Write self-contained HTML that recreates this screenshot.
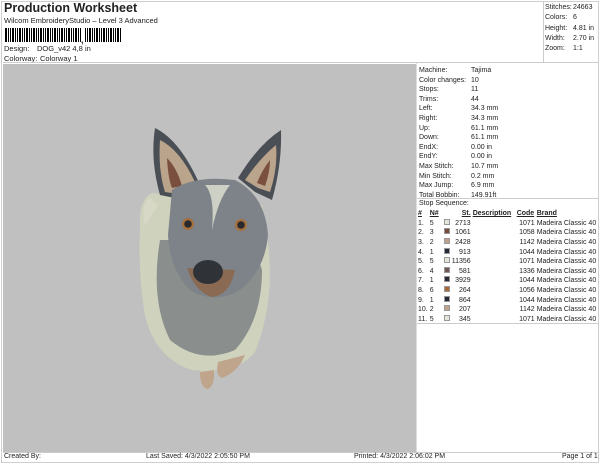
<!DOCTYPE html>
<html><head><style>
*{margin:0;padding:0;box-sizing:border-box}
body{width:600px;height:464px;background:#fff;font-family:"Liberation Sans",sans-serif;color:#222;position:relative;overflow:hidden;font-size:7px}
.a{position:absolute;white-space:nowrap}
#frame{position:absolute;left:1px;top:1px;width:598px;height:462px;border:1px solid #cfcfcf}
#gray{position:absolute;left:3px;top:64px;width:413px;height:388px;background:#c0c0c0}
#rp{position:absolute;left:416px;top:63px;width:182px;height:389px;border-left:1px solid #ddd}
.row{position:absolute;left:2px;white-space:nowrap;width:170px}
.row span{position:absolute;left:52px;white-space:nowrap}
table{position:absolute;left:417px;top:209px;border-collapse:collapse;font-size:7px}
td{padding:0 1px;height:9.6px;line-height:9px;white-space:nowrap}
.sw{display:inline-block;width:6px;height:6px;border:1px solid #999}
</style></head><body>
<div id="frame"></div>
<div class="a" style="left:4px;top:1px;font-size:12.5px;font-weight:bold">Production Worksheet</div>
<div class="a" style="left:4px;top:16px;font-size:7.5px">Wilcom EmbroideryStudio – Level 3 Advanced</div>
<div class="a" style="left:5px;top:28px;width:117px;height:14px;background:repeating-linear-gradient(90deg,#000 0 2px,#fff 2px 3px,#000 3px 4px,#fff 4px 5px,#000 5px 6px,#fff 6px 7px)"></div>
<div class="a" style="left:81px;top:28px;width:3px;height:14px;background:#fff"></div>
<div class="a" style="left:81px;top:35px;font-size:9px;font-weight:bold">,</div>
<div class="a" style="left:4px;top:44px;font-size:7.5px">Design:</div>
<div class="a" style="left:37px;top:44px;font-size:7.5px">DOG_v42 4,8 in</div>
<div class="a" style="left:4px;top:54px;font-size:7.5px">Colorway:</div>
<div class="a" style="left:40px;top:54px;font-size:7.5px">Colorway 1</div>
<div class="a" style="left:3px;top:62px;width:595px;height:1px;background:#ccc"></div>
<div class="a" style="left:543px;top:1px;width:1px;height:62px;background:#ccc"></div>
<div class="a" style="left:545px;top:3px;font-size:7px;line-height:10.3px">Stitches:<br>Colors:<br>Height:<br>Width:<br>Zoom:</div>
<div class="a" style="left:573px;top:3px;font-size:7px;line-height:10.3px">24663<br>6<br>4.81 in<br>2.70 in<br>1:1</div>
<div id="gray">
<svg width="413" height="388" viewBox="3 64 413 388">
<path d="M152 193 Q138 200 140 230 Q138 270 144 310 Q150 345 175 362 Q190 372 200 370 L205 385 L212 386 L215 370 Q240 370 255 352 Q268 320 270 280 Q270 240 262 205 Z" fill="#cfd2bd"/>
<path d="M150 198 Q140 205 145 225 Q152 215 158 205 Z" fill="#d8d8c6"/>
<path d="M160 240 Q150 300 170 340 Q200 365 235 350 Q262 320 262 270 Q250 230 210 240 Z" fill="#8a8e8c"/>
<path d="M155 128 Q150 160 160 195 L185 200 L200 185 Q180 140 155 128 Z" fill="#4a4f55"/>
<path d="M160 140 Q158 170 165 192 L185 195 L195 182 Q180 150 160 140 Z" fill="#bba48c"/>
<path d="M167 158 Q168 178 172 188 L182 186 Q177 168 167 158 Z" fill="#7a4f3e"/>
<path d="M281 130 Q258 145 238 178 L255 192 L272 200 Q282 165 281 130 Z" fill="#4a4f55"/>
<path d="M276 145 Q260 158 245 180 L258 188 L270 192 Q278 168 276 145 Z" fill="#bba48c"/>
<path d="M270 160 Q262 170 257 183 L265 186 Q270 172 270 160 Z" fill="#7a4f3e"/>
<path d="M172 190 Q195 175 235 180 Q265 195 268 235 Q265 270 240 290 Q215 305 190 290 Q170 270 168 235 Z" fill="#7d8388"/>
<path d="M205 185 Q215 195 212 230 Q218 200 230 185 Z" fill="#cdd0c4"/>
<circle cx="188" cy="224" r="6" fill="#a7703f"/><circle cx="188" cy="224" r="3.8" fill="#2a2a2e"/>
<circle cx="241" cy="225" r="6" fill="#a7703f"/><circle cx="241" cy="225" r="3.8" fill="#2a2a2e"/>
<path d="M187 268 Q195 292 212 297 Q230 295 235 270 Z" fill="#8a6a52"/>
<ellipse cx="208" cy="272" rx="15" ry="12" fill="#2f3236"/>
<path d="M200 372 Q200 388 208 389 Q215 386 214 370 Z" fill="#bfa58c"/>
<path d="M218 362 Q215 375 222 378 Q238 372 245 355 Z" fill="#bfa58c"/>
</svg>
</div>
<div id="rp">
<div class="row" style="top:4px">Machine:<span>Tajima</span></div>
<div class="row" style="top:13.6px">Color changes:<span>10</span></div>
<div class="row" style="top:23.2px">Stops:<span>11</span></div>
<div class="row" style="top:32.8px">Trims:<span>44</span></div>
<div class="row" style="top:42.4px">Left:<span>34.3 mm</span></div>
<div class="row" style="top:52px">Right:<span>34.3 mm</span></div>
<div class="row" style="top:61.6px">Up:<span>61.1 mm</span></div>
<div class="row" style="top:71.2px">Down:<span>61.1 mm</span></div>
<div class="row" style="top:80.8px">EndX:<span>0.00 in</span></div>
<div class="row" style="top:90.4px">EndY:<span>0.00 in</span></div>
<div class="row" style="top:100px">Max Stitch:<span>10.7 mm</span></div>
<div class="row" style="top:109.6px">Min Stitch:<span>0.2 mm</span></div>
<div class="row" style="top:119.2px">Max Jump:<span>6.9 mm</span></div>
<div class="row" style="top:128.8px">Total Bobbin:<span>149.91ft</span></div>
<div class="a" style="left:0;top:135px;width:182px;height:1px;background:#ccc"></div>
<div class="row" style="top:137px">Stop Sequence:</div>
<div class="a" style="left:0;top:260px;width:182px;height:1px;background:#ccc"></div>
</div>
<table>
<tr style="font-weight:bold;text-decoration:underline"><td style="width:11px">#</td><td style="width:14px">N#</td><td style="width:8px"></td><td style="width:20px;text-align:right">St.</td><td style="width:44px">Description</td><td style="width:20px">Code</td><td>Brand</td></tr>
<tr><td>1.</td><td>5</td><td><i class="sw" style="background:#e8e6dc"></i></td><td align=right>2713</td><td></td><td align=right>1071</td><td>Madeira Classic 40</td></tr>
<tr><td>2.</td><td>3</td><td><i class="sw" style="background:#7a4a38"></i></td><td align=right>1061</td><td></td><td align=right>1058</td><td>Madeira Classic 40</td></tr>
<tr><td>3.</td><td>2</td><td><i class="sw" style="background:#c0a08e"></i></td><td align=right>2428</td><td></td><td align=right>1142</td><td>Madeira Classic 40</td></tr>
<tr><td>4.</td><td>1</td><td><i class="sw" style="background:#262a38"></i></td><td align=right>913</td><td></td><td align=right>1044</td><td>Madeira Classic 40</td></tr>
<tr><td>5.</td><td>5</td><td><i class="sw" style="background:#e8e6dc"></i></td><td align=right>11356</td><td></td><td align=right>1071</td><td>Madeira Classic 40</td></tr>
<tr><td>6.</td><td>4</td><td><i class="sw" style="background:#6e5a55"></i></td><td align=right>581</td><td></td><td align=right>1336</td><td>Madeira Classic 40</td></tr>
<tr><td>7.</td><td>1</td><td><i class="sw" style="background:#262a38"></i></td><td align=right>3929</td><td></td><td align=right>1044</td><td>Madeira Classic 40</td></tr>
<tr><td>8.</td><td>6</td><td><i class="sw" style="background:#a8683a"></i></td><td align=right>264</td><td></td><td align=right>1056</td><td>Madeira Classic 40</td></tr>
<tr><td>9.</td><td>1</td><td><i class="sw" style="background:#262a38"></i></td><td align=right>864</td><td></td><td align=right>1044</td><td>Madeira Classic 40</td></tr>
<tr><td>10.</td><td>2</td><td><i class="sw" style="background:#c0a08e"></i></td><td align=right>207</td><td></td><td align=right>1142</td><td>Madeira Classic 40</td></tr>
<tr><td>11.</td><td>5</td><td><i class="sw" style="background:#e8e6dc"></i></td><td align=right>345</td><td></td><td align=right>1071</td><td>Madeira Classic 40</td></tr>
</table>
<div class="a" style="left:3px;top:452px;width:595px;height:1px;background:#ccc"></div>
<div class="a" style="left:4px;top:453px">Created By:</div>
<div class="a" style="left:146px;top:453px">Last Saved: 4/3/2022 2:05:50 PM</div>
<div class="a" style="left:354px;top:453px">Printed: 4/3/2022 2:06:02 PM</div>
<div class="a" style="left:562px;top:453px">Page 1 of 1</div>
</body></html>
